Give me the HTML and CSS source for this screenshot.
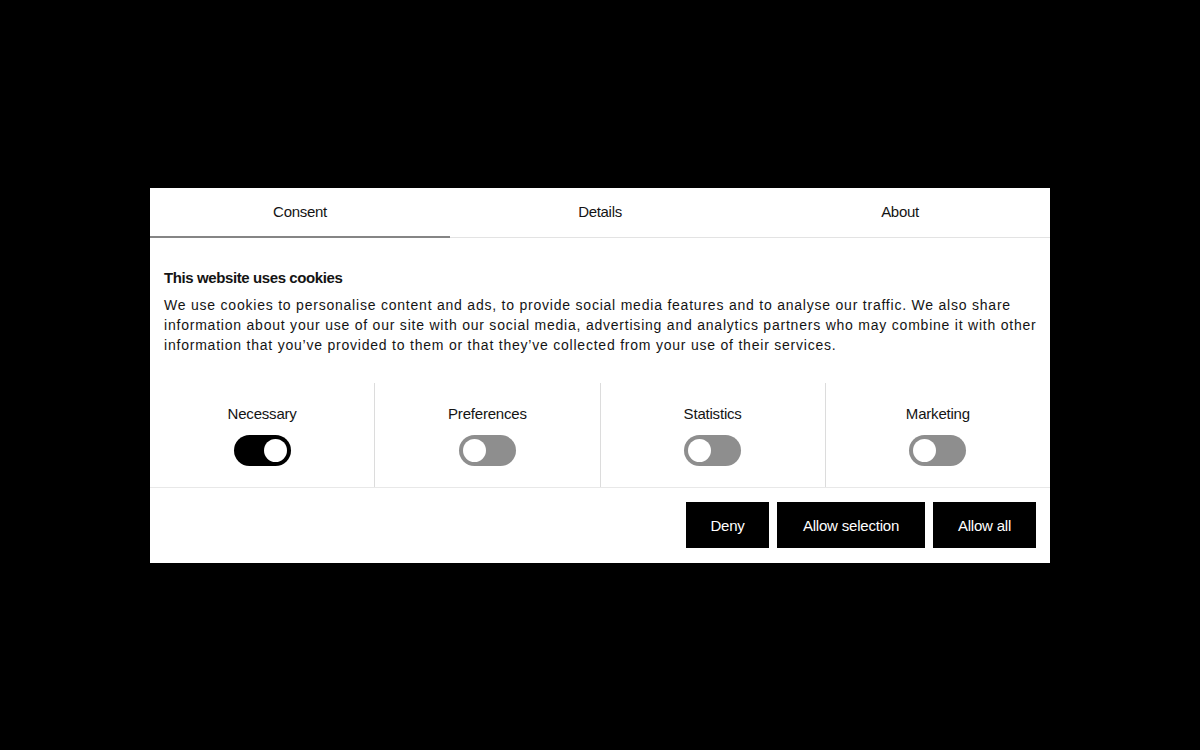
FILE: index.html
```html
<!DOCTYPE html>
<html>
<head>
<meta charset="utf-8">
<link rel="stylesheet" href="styles.css">
</head>
<body>
<div class="screen">
  <div class="dialog">
    <div class="tabs">
      <div class="tab active">Consent</div>
      <div class="tab">Details</div>
      <div class="tab">About</div>
    </div>
    <div class="content">
      <h2 class="title">This website uses cookies</h2>
      <p class="text"><span class="line">We use cookies to personalise content and ads, to provide social media features and to analyse our traffic. We also share</span> <span class="line">information about your use of our site with our social media, advertising and analytics partners who may combine it with other</span> <span class="line">information that you’ve provided to them or that they’ve collected from your use of their services.</span></p>
    </div>
    <div class="toggles">
      <div class="cat"><div class="cat-label">Necessary</div><div class="switch on"><span class="knob"></span></div></div>
      <div class="cat"><div class="cat-label">Preferences</div><div class="switch"><span class="knob"></span></div></div>
      <div class="cat"><div class="cat-label">Statistics</div><div class="switch"><span class="knob"></span></div></div>
      <div class="cat"><div class="cat-label">Marketing</div><div class="switch"><span class="knob"></span></div></div>
    </div>
    <div class="actions">
      <button class="btn btn-deny">Deny</button>
      <button class="btn btn-sel">Allow selection</button>
      <button class="btn btn-all">Allow all</button>
    </div>
  </div>
</div>
</body>
</html>
```
FILE: styles.css
```css
html, body {
  margin: 0;
  padding: 0;
  background: #000;
}
.screen {
  width: 1200px;
  height: 750px;
  display: flex;
  align-items: center;
  justify-content: center;
  font-family: "Liberation Sans", Arial, sans-serif;
  color: #141414;
}
.dialog {
  width: 900px;
  height: 375px;
  background: #fff;
  display: flex;
  flex-direction: column;
}
.tabs {
  display: flex;
  height: 50px;
  border-bottom: 1px solid #e3e3e3;
  box-sizing: border-box;
}
.tab {
  flex: 1;
  display: flex;
  align-items: center;
  justify-content: center;
  font-size: 15px;
  letter-spacing: -0.3px;
  color: #141414;
  padding-bottom: 1px;
}
.tab.active {
  border-bottom: 2px solid #858585;
  margin-bottom: -1px;
}
.content {
  padding: 31px 14px 0 14px;
  height: 145px;
  box-sizing: border-box;
}
.title {
  margin: 0;
  font-size: 15px;
  font-weight: 600;
  letter-spacing: -0.4px;
  line-height: 18px;
}
.text {
  margin: 8px 0 0 0;
  font-size: 14px;
  line-height: 20px;
  letter-spacing: 0.78px;
  color: #141414;
}
.line {
  display: block;
  white-space: nowrap;
}
.toggles {
  display: flex;
  height: 105px;
  border-bottom: 1px solid #e8e8e8;
  box-sizing: border-box;
}
.cat {
  flex: 1;
  display: flex;
  flex-direction: column;
  align-items: center;
  padding-top: 22px;
  border-left: 1px solid #dcdcdc;
}
.cat:first-child {
  border-left: none;
}
.cat-label {
  font-size: 15px;
  letter-spacing: -0.2px;
  line-height: 18px;
  font-weight: 500;
}
.switch {
  margin-top: 12px;
  width: 57px;
  height: 31px;
  border-radius: 16px;
  background: #8e8e8e;
  position: relative;
}
.switch .knob {
  position: absolute;
  top: 4px;
  left: 4px;
  width: 23px;
  height: 23px;
  border-radius: 50%;
  background: #fff;
}
.switch.on {
  background: #000;
}
.switch.on .knob {
  left: 30px;
}
.actions {
  flex: 1;
  display: flex;
  justify-content: flex-end;
  align-items: center;
  gap: 8px;
  padding: 0 14px;
}
.btn {
  height: 46px;
  background: #000;
  color: #fff;
  border: none;
  font-family: "Liberation Sans", Arial, sans-serif;
  font-size: 15px;
  letter-spacing: -0.2px;
  padding: 0;
}
.btn-deny { width: 83px; }
.btn-sel { width: 148px; }
.btn-all { width: 103px; }
```
